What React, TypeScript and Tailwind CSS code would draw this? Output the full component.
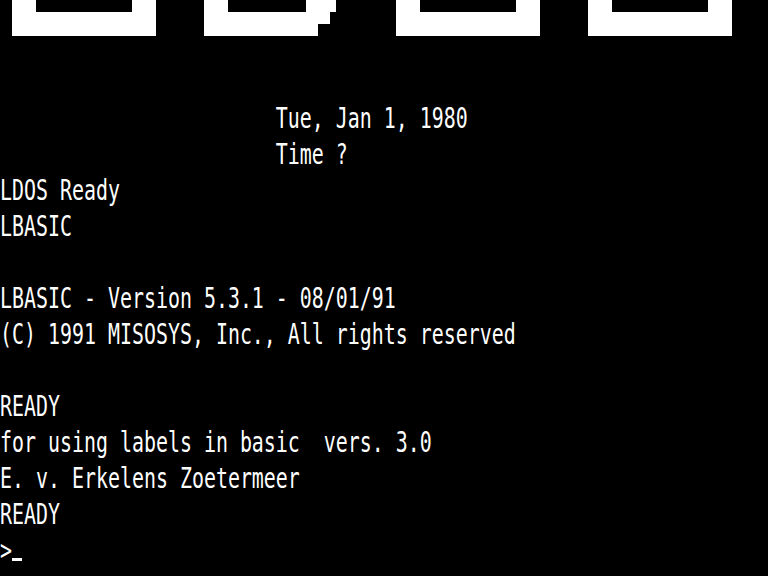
const lines: string[] = [
  "",
  "",
  "                       Tue, Jan 1, 1980",
  "                       Time ?",
  "LDOS Ready",
  "LBASIC",
  "",
  "LBASIC - Version 5.3.1 - 08/01/91",
  "(C) 1991 MISOSYS, Inc., All rights reserved",
  "",
  "READY",
  "for using labels in basic  vers. 3.0",
  "E. v. Erkelens Zoetermeer",
  "READY",
];

// TRS-80 block graphics left over on the top row after the screen scrolled
function GraphicsRow() {
  return (
    <svg width="768" height="36" viewBox="0 0 768 36" className="block">
      <path
        fillRule="evenodd"
        fill="#fff"
        d="M12 0H156V36H12Z M36 0H132V12H36Z
           M204 0H336V12H330V24H318V36H204Z M228 0H306V12H228Z
           M396 0H540V36H396Z M420 0H516V12H420Z
           M588 0H732V36H588Z M612 0H708V12H612Z"
      />
    </svg>
  );
}

function Row({ children }: { children: React.ReactNode }) {
  return (
    <div className="flex h-[36px] items-start overflow-visible">
      <span className="-mt-[3px] block origin-top scale-y-[1.445] whitespace-pre text-[19.93px] leading-[20px]">
        {children}
      </span>
    </div>
  );
}

export default function App() {
  return (
    <div className="h-[576px] w-[768px] overflow-hidden bg-black text-white font-['DejaVu_Sans_Mono',monospace]">
      <GraphicsRow />
      {lines.map((line, i) => (
        <Row key={i}>{line}</Row>
      ))}
      <div className="flex h-[36px] items-start">
        <span className="-mt-[3px] block w-[12px] origin-top scale-y-[1.445] whitespace-pre text-[19.93px] leading-[20px]">
          {">"}
        </span>
        <div className="mt-[18px] h-[3px] w-[10px] bg-white" />
      </div>
    </div>
  );
}
